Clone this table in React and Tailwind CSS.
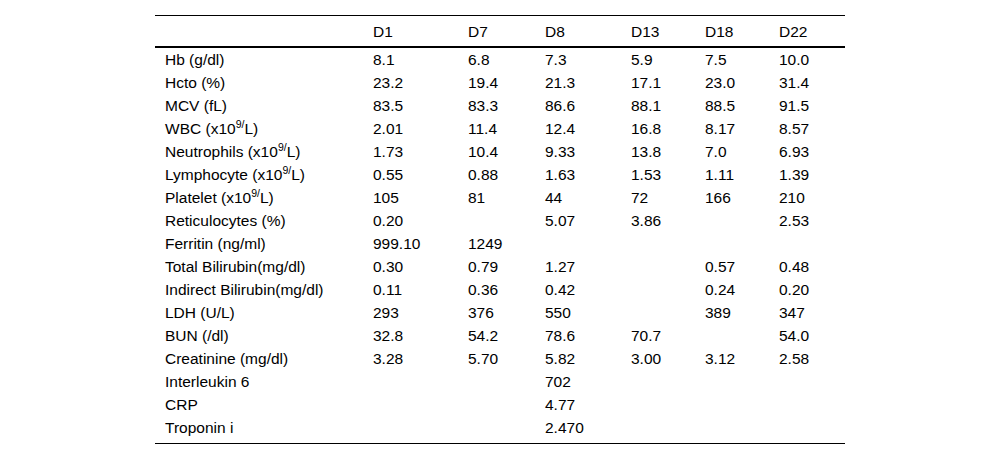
import React from "react";

const sup = (label) => (
  <>
    {label} (x10<sup className="text-[10.5px] -top-[6px]">9/</sup>L)
  </>
);

const rows = [
  ["Hb (g/dl)", "8.1", "6.8", "7.3", "5.9", "7.5", "10.0"],
  ["Hcto (%)", "23.2", "19.4", "21.3", "17.1", "23.0", "31.4"],
  ["MCV (fL)", "83.5", "83.3", "86.6", "88.1", "88.5", "91.5"],
  [sup("WBC"), "2.01", "11.4", "12.4", "16.8", "8.17", "8.57"],
  [sup("Neutrophils"), "1.73", "10.4", "9.33", "13.8", "7.0", "6.93"],
  [sup("Lymphocyte"), "0.55", "0.88", "1.63", "1.53", "1.11", "1.39"],
  [sup("Platelet"), "105", "81", "44", "72", "166", "210"],
  ["Reticulocytes (%)", "0.20", "", "5.07", "3.86", "", "2.53"],
  ["Ferritin (ng/ml)", "999.10", "1249", "", "", "", ""],
  ["Total Bilirubin(mg/dl)", "0.30", "0.79", "1.27", "", "0.57", "0.48"],
  ["Indirect Bilirubin(mg/dl)", "0.11", "0.36", "0.42", "", "0.24", "0.20"],
  ["LDH (U/L)", "293", "376", "550", "", "389", "347"],
  ["BUN (/dl)", "32.8", "54.2", "78.6", "70.7", "", "54.0"],
  ["Creatinine (mg/dl)", "3.28", "5.70", "5.82", "3.00", "3.12", "2.58"],
  ["Interleukin 6", "", "", "702", "", "", ""],
  ["CRP", "", "", "4.77", "", "", ""],
  ["Troponin i", "", "", "2.470", "", "", ""],
];

const headers = ["", "D1", "D7", "D8", "D13", "D18", "D22"];
const grid = "grid grid-cols-[208px_95px_77px_86px_74px_74px_76px]";

export default function App() {
  return (
    <div
      className="w-[1000px] h-[461px] bg-white text-black pt-[15px] pl-[155px]"
      style={{ fontFamily: '"Liberation Sans", Arial, sans-serif' }}
    >
      <div className="w-[690px] border-t border-black border-b border-b-black pb-[4px] text-[15.5px] leading-[23px]">
        <div className={`${grid} h-[32px] items-center border-b-2 border-black`}>
          {headers.map((h, i) => (
            <div key={i} className="pl-[10px] pt-[1px]">{h}</div>
          ))}
        </div>
        {rows.map((r, ri) => (
          <div key={ri} className={`${grid} h-[23px] items-center`}>
            {r.map((c, ci) => (
              <div key={ci} className="pl-[10px] whitespace-nowrap">{c}</div>
            ))}
          </div>
        ))}
      </div>
    </div>
  );
}
